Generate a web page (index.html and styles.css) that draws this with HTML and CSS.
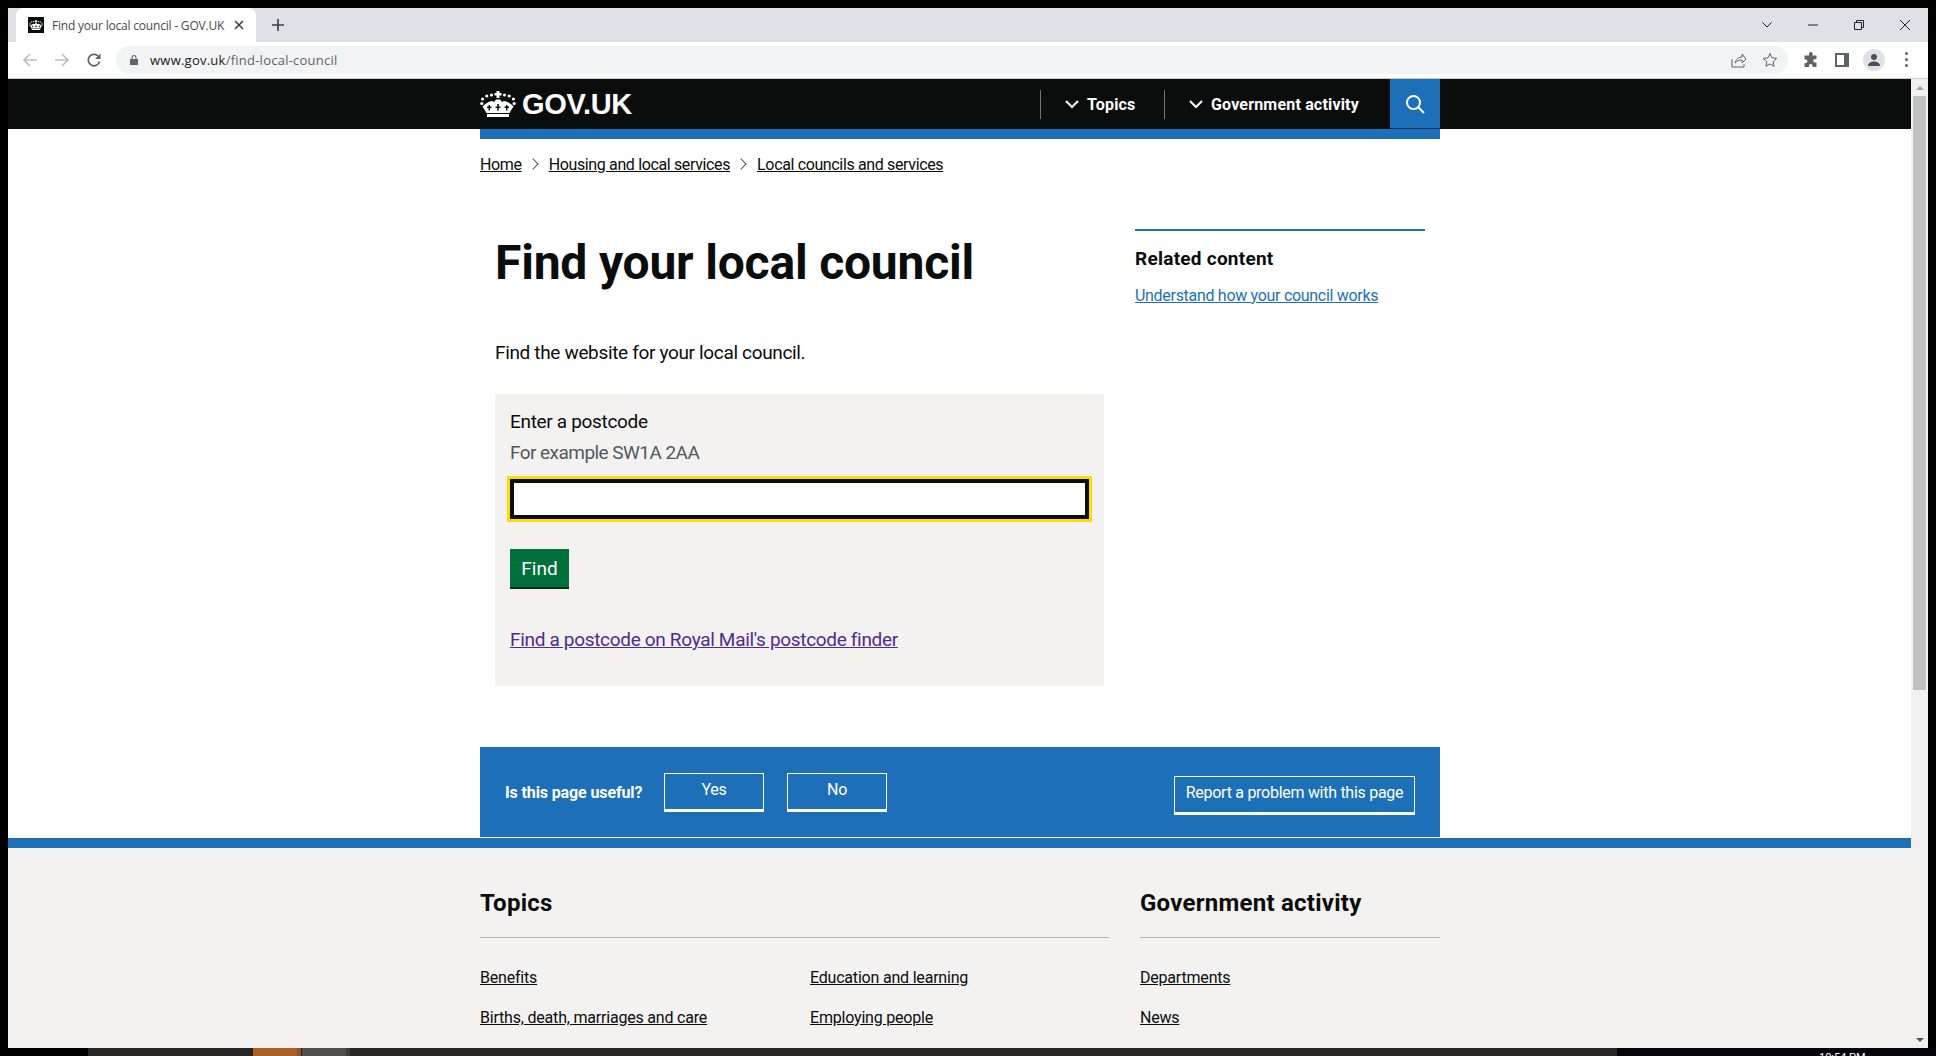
FILE: index.html
```html
<!DOCTYPE html>
<html lang="en">

<head>
  <meta charset="UTF-8" />
  <title>Find your local council - GOV.UK</title>
  <link rel="stylesheet" href="styles.css">
</head>

<body>
  <div class="window">
    <div class="tabstrip">
      <div class="tab">
        <span class="favicon">
          <svg viewBox="0 0 36 26" width="14" height="10"><use href="#crown"></use></svg>
        </span>
        <span class="tab-title">Find your local council - GOV.UK</span>
        <svg class="tab-close" viewBox="0 0 10 10" width="10" height="10"><path d="M1 1l8 8M9 1l-8 8"></path></svg>
      </div>
      <svg class="tab-new" viewBox="0 0 12 12" width="12" height="12"><path d="M6 0v12M0 6h12"></path></svg>
      <div class="win-controls">
        <svg viewBox="0 0 10 6" width="10" height="6"><path d="M.5.5L5 5 9.500.5"></path></svg>
        <svg viewBox="0 0 10 2" width="10" height="2"><path d="M0 1h10"></path></svg>
        <svg viewBox="0 0 10 10" width="10" height="10"><path d="M.5 2.500h7v7h-7zM2.500 2.500v-2h7v7h-2"></path></svg>
        <svg viewBox="0 0 10 10" width="10" height="10"><path d="M0 0l10 10M10 0L0 10"></path></svg>
      </div>
    </div>

    <div class="toolbar">
      <svg class="nav-icon faint" viewBox="0 0 16 16" width="16" height="16"><path d="M15 8H2M8 2L2 8l6 6"></path></svg>
      <svg class="nav-icon faint" viewBox="0 0 16 16" width="16" height="16"><path d="M1 8h13M8 2l6 6-6 6"></path></svg>
      <svg class="nav-icon reload" viewBox="0 0 16 16" width="16" height="16"><path d="M13.500 9.500A5.700 5.700 0 1 1 12 4"></path><path class="solid" d="M14.500 1.500v5.500H9z"></path></svg>
      <div class="omnibox">
        <svg class="lock" viewBox="0 0 8 10" width="8" height="10"><path d="M0 4h8v6H0zM1.500 4V2.500a2.500 2.500 0 0 1 5 0V4H5.500V2.500a1.500 1.500 0 0 0-3 0V4z"></path></svg>
        <span class="url"><span class="url-host">www.gov.uk</span>/find-local-council</span>
        <svg class="omni-icon share" viewBox="0 0 16 16" width="16" height="16"><path d="M1 7v8h12v-3M4 11c1-4 4-6 7-6V2l4 5-4 4V8C8 8 6 9 4 11z"></path></svg>
        <svg class="omni-icon" viewBox="0 0 16 16" width="16" height="16"><path d="M8 1.500l2 4.300 4.700.6-3.500 3.200.9 4.700L8 12l-4.100 2.300.9-4.700L1.300 6.400 6 5.800z"></path></svg>
      </div>
      <svg class="puzzle" viewBox="0 0 16 16" width="16" height="16"><path d="M6 1.500a1.800 1.800 0 0 1 3.500 0V3.500h4v3.500h-1.500a1.800 1.800 0 0 0 0 3.600h1.500V15h-4v-1.500a1.800 1.800 0 0 0-3.500 0V15H1.500v-4H3a1.800 1.800 0 0 0 0-3.500H1.500v-4H6z"></path></svg>
      <span class="side-panel"></span>
      <span class="avatar">
        <svg viewBox="0 0 14 14" width="14" height="14"><circle cx="7" cy="4" r="3"></circle><path d="M1 13c0-3 3-4.500 6-4.500s6 1.500 6 4.500z"></path></svg>
      </span>
      <span class="kebab"><i></i><i></i><i></i></span>
    </div>

    <div class="viewport">
      <div class="page">
        <header class="site-header">
          <div class="container header-inner">
            <a class="logo">
              <svg viewBox="0 0 36 26" width="36" height="26"><use href="#crown"></use></svg>
              <span>GOV.UK</span>
            </a>
            <nav class="header-nav">
              <a class="nav-link">
                <svg viewBox="0 0 14 9" width="14" height="9"><path d="M1 1l6 6 6-6"></path></svg>
                Topics
              </a>
              <a class="nav-link nav-link-wide">
                <svg viewBox="0 0 14 9" width="14" height="9"><path d="M1 1l6 6 6-6"></path></svg>
                Government activity
              </a>
              <span class="search-btn">
                <svg viewBox="0 0 20 20" width="20" height="20"><circle cx="8.500" cy="8.500" r="6.500"></circle><path d="M13.500 13.500L19 19"></path></svg>
              </span>
            </nav>
          </div>
        </header>

        <div class="container">
          <div class="header-rule"></div>
          <ol class="breadcrumbs">
            <li><a>Home</a></li>
            <li><a>Housing and local services</a></li>
            <li><a>Local councils and services</a></li>
          </ol>

          <div class="content">
            <main class="main-col">
              <h1>Find your local council</h1>
              <p class="lead">Find the website for your local council.</p>
              <div class="postcode-box">
                <label class="field-label">Enter a postcode</label>
                <div class="field-hint">For example SW1A 2AA</div>
                <div class="postcode-input"></div>
                <button class="find-btn">Find</button>
                <a class="visited-link">Find a postcode on Royal Mail's postcode finder</a>
              </div>
            </main>
            <aside class="related">
              <h2>Related content</h2>
              <a>Understand how your council works</a>
            </aside>
          </div>

          <div class="feedback">
            <strong>Is this page useful?</strong>
            <button class="fb-btn">Yes</button>
            <button class="fb-btn">No</button>
            <button class="fb-btn fb-report">Report a problem with this page</button>
          </div>
        </div>

        <footer class="site-footer">
          <div class="container footer-cols">
            <section class="footer-topics">
              <h2>Topics</h2>
              <ul>
                <li><a>Benefits</a></li>
                <li><a>Education and learning</a></li>
                <li><a>Births, death, marriages and care</a></li>
                <li><a>Employing people</a></li>
              </ul>
            </section>
            <section class="footer-gov">
              <h2>Government activity</h2>
              <ul>
                <li><a>Departments</a></li>
                <li><a>News</a></li>
              </ul>
            </section>
          </div>
        </footer>
      </div>

      <div class="scrollbar">
        <span class="arrow-up"></span>
        <span class="thumb"></span>
        <span class="arrow-down"></span>
      </div>
    </div>
  </div>

  <div class="taskbar">
    <span class="task-blank"></span>
    <span class="task-orange"></span>
    <span class="task-gray"></span>
    <span class="task-rest"></span>
    <span class="task-tray">
      <span class="task-clock">10:54 PM</span>
    </span>
  </div>

  <svg class="defs" width="0" height="0">
    <symbol id="crown" viewBox="0 0 36 26">
      <path class="crown-fill" d="M16.500 0h3v2h2v2.500h-2V7h-3V4.500h-2V2h2z"></path>
      <circle class="crown-fill" cx="1.800" cy="12.500" r="1.600"></circle>
      <circle class="crown-fill" cx="34.200" cy="12.500" r="1.600"></circle>
      <circle class="crown-fill" cx="2.600" cy="8" r="1.600"></circle>
      <circle class="crown-fill" cx="33.400" cy="8" r="1.600"></circle>
      <circle class="crown-fill" cx="6.800" cy="5" r="1.600"></circle>
      <circle class="crown-fill" cx="29.200" cy="5" r="1.600"></circle>
      <circle class="crown-fill" cx="11.500" cy="4" r="1.600"></circle>
      <circle class="crown-fill" cx="24.500" cy="4" r="1.600"></circle>
      <path class="crown-fill" fill-rule="evenodd" d="M2.500 15.500C6 12 9 10.500 12 10l2 1 2-2.500h4l2 2.500 2-1c3 .5 6 2 9.500 5.500-1.500 2.500-3 4.500-4 6.500H6.500c-1-2-2.500-4-4-6.500zM8.500 14v1.500H7V17h1.500v2.500H10V17h1.500v-1.500H10V14zM17.200 13v2.500h-1.700V17h1.700v2.500h1.600V17h1.700v-1.500h-1.700V13zM26 14v1.500h-1.500V17H26v2.500h1.500V17H29v-1.500h-1.500V14z"></path>
      <path class="crown-fill" d="M7 23h22v3H7z"></path>
    </symbol>
  </svg>
</body>

</html>
```

FILE: styles.css
```css
* {
  box-sizing: border-box;
}

html,
body {
  height: 100%;
  margin: 0;
}

body {
  width: 1936px;
  height: 1056px;
  overflow: hidden;
  display: flex;
  flex-direction: column;
  background: #000;
  font-family: Roboto, sans-serif;
  color: #0b0c0c;
}

a {
  color: inherit;
  text-decoration: underline;
}

ul,
ol {
  list-style: none;
  margin: 0;
  padding: 0;
}

svg path {
  fill: none;
  stroke: currentColor;
}

svg .crown-fill {
  fill: currentColor;
  stroke: none;
}

/* browser chrome */
.window {
  flex: 1;
  min-height: 0;
  margin: 8px 8px 0;
  display: flex;
  flex-direction: column;
  background: #fff;
}

.tabstrip {
  height: 34px;
  flex: none;
  display: flex;
  align-items: center;
  padding-left: 8px;
  background: #dee1e6;
}

.tab {
  width: 240px;
  height: 34px;
  display: flex;
  align-items: center;
  padding: 0 12px;
  background: #fff;
  border-radius: 8px 8px 0 0;
  font-family: "Open Sans", sans-serif;
  font-size: 12px;
  color: #45494e;
}

.favicon {
  width: 16px;
  height: 16px;
  display: flex;
  align-items: center;
  justify-content: center;
  background: #0b0c0c;
  color: #fff;
}

.tab-title {
  margin-left: 8px;
  flex: 1;
  white-space: nowrap;
  letter-spacing: -0.2px;
}

.tab-close {
  color: #3c4043;
  margin-left: 6px;
}

.tab-close path,
.tab-new path {
  stroke-width: 1.6;
}

.tab-new {
  margin-left: 16px;
  color: #3c4043;
}

.win-controls {
  margin-left: auto;
  display: flex;
  align-items: center;
  gap: 36px;
  padding-right: 18px;
  color: #202124;
}

.toolbar {
  height: 37px;
  flex: none;
  display: flex;
  align-items: center;
  padding: 0 0 1px 14px;
  background: #fff;
  border-bottom: 1px solid #ccc;
  color: #5f6368;
}

.nav-icon path {
  stroke-width: 1.7;
}

.nav-icon {
  margin-right: 16px;
  flex: none;
}

.nav-icon.faint {
  color: #bdc0c4;
}

.nav-icon .solid {
  fill: currentColor;
  stroke: none;
}

.reload {
  margin-right: 14px;
}

.omnibox {
  width: 1672px;
  height: 28px;
  flex: none;
  display: flex;
  align-items: center;
  padding: 0 10px 0 14px;
  background: #f1f3f4;
  border-radius: 14px;
}

.lock {
  flex: none;
}

.lock path {
  fill: #5f6368;
  stroke: none;
}

.url {
  margin-left: 12px;
  font-family: "Open Sans", sans-serif;
  font-size: 13px;
  letter-spacing: 0.24px;
  color: #5f6368;
}

.url-host {
  color: #202124;
}

.omni-icon {
  margin-left: 15px;
  flex: none;
}

.omni-icon.share {
  margin-left: auto;
}

.puzzle {
  margin-left: 15px;
  flex: none;
}

.puzzle path {
  fill: #5f6368;
  stroke: none;
}

.side-panel {
  width: 14px;
  height: 14px;
  flex: none;
  margin-left: 16px;
  background: #fff;
  border: 2px solid #5f6368;
  border-right-width: 5px;
}

.avatar {
  width: 22px;
  height: 22px;
  flex: none;
  margin-left: 14px;
  display: flex;
  align-items: center;
  justify-content: center;
  background: #dee1e6;
  border-radius: 50%;
  color: #4a4f5a;
}

.avatar path {
  fill: currentColor;
  stroke: none;
}

.avatar circle {
  fill: currentColor;
}

.kebab {
  margin-left: 20px;
  display: flex;
  flex-direction: column;
  gap: 3px;
}

.kebab i {
  width: 3px;
  height: 3px;
  background: #5f6368;
  border-radius: 50%;
}

/* page area */
.viewport {
  flex: 1;
  min-height: 0;
  display: flex;
}

.page {
  flex: 1;
  min-width: 0;
  overflow: hidden;
  background: #fff;
}

.container {
  width: 960px;
  margin-left: 472px;
}

.scrollbar {
  width: 17px;
  flex: none;
  display: flex;
  flex-direction: column;
  align-items: center;
  background: #f1f1f1;
}

.arrow-up {
  margin-top: 7px;
  border: 4px solid transparent;
  border-top: 0;
  border-bottom: 4px solid #a3a3a3;
}

.thumb {
  width: 13px;
  height: 594px;
  margin-top: 6px;
  background: #c1c1c1;
}

.arrow-down {
  margin-top: auto;
  margin-bottom: 6px;
  border: 4px solid transparent;
  border-bottom: 0;
  border-top: 4px solid #505050;
}

/* site header */
.site-header {
  height: 50px;
  background: #0b0c0c;
  color: #fff;
}

.header-inner {
  height: 50px;
  display: flex;
  align-items: center;
  justify-content: space-between;
}

.logo {
  display: flex;
  align-items: center;
  gap: 6px;
  text-decoration: none;
  font-family: "Liberation Sans", sans-serif;
  font-size: 29px;
  font-weight: 700;
  letter-spacing: -0.3px;
}

.header-nav {
  display: flex;
  align-items: center;
  height: 50px;
}

.nav-link {
  height: 29px;
  display: flex;
  align-items: center;
  gap: 8px;
  width: 124px;
  padding-left: 24px;
  border-left: 1px solid #6f777b;
  text-decoration: none;
  font-size: 16px;
  font-weight: 700;
  letter-spacing: 0.18px;
}

.nav-link svg path {
  stroke-width: 2;
}

.nav-link-wide {
  width: 226px;
}

.search-btn {
  width: 50px;
  height: 50px;
  display: flex;
  align-items: center;
  justify-content: center;
  background: #1d70b8;
  border-bottom: 1px solid #003078;
}

.search-btn circle,
.search-btn path {
  fill: none;
  stroke: #fff;
  stroke-width: 2;
}

.header-rule {
  height: 10px;
  background: #1d70b8;
}

.breadcrumbs {
  display: flex;
  align-items: center;
  height: 50px;
  font-size: 16px;
  letter-spacing: -0.36px;
}

.breadcrumbs li {
  display: flex;
  align-items: center;
}

.breadcrumbs li + li::before {
  content: "";
  width: 7px;
  height: 7px;
  margin: 0 12px 0 7px;
  border-top: 1px solid #505a5f;
  border-right: 1px solid #505a5f;
  transform: rotate(45deg);
}

.content {
  height: 558px;
  display: flex;
  padding: 40px 15px 0;
}

.main-col {
  width: 609px;
  flex: none;
  padding-top: 9px;
}

h1 {
  margin: 0;
  font-size: 48px;
  line-height: 50px;
  font-weight: 700;
  letter-spacing: -0.2px;
}

.lead {
  margin: 52px 0 0;
  font-size: 19px;
  line-height: 25px;
  letter-spacing: -0.34px;
}

.postcode-box {
  height: 292px;
  margin-top: 29px;
  padding: 15px;
  background: #f3f2f1;
  font-size: 19px;
  letter-spacing: -0.32px;
}

.field-label {
  display: block;
  line-height: 25px;
}

.field-hint {
  margin-top: 6px;
  line-height: 25px;
  letter-spacing: -0.55px;
  color: #505a5f;
}

.postcode-input {
  height: 40px;
  margin-top: 14px;
  background: #fff;
  border: 2px solid #0b0c0c;
  outline: 3px solid #fd0;
  box-shadow: inset 0 0 0 2px #0b0c0c;
}

.find-btn {
  display: block;
  width: 59px;
  height: 38px;
  margin-top: 30px;
  padding: 0;
  border: 0;
  background: #00703c;
  box-shadow: 0 2px 0 #002d18;
  color: #fff;
  font-family: inherit;
  font-size: 19px;
}

.visited-link {
  display: block;
  margin-top: 40px;
  line-height: 25px;
  color: #4c2c92;
}

.related {
  width: 290px;
  height: 200px;
  margin-left: 31px;
  padding-top: 15px;
  border-top: 2px solid #1d70b8;
  font-size: 16px;
  letter-spacing: -0.3px;
  color: #1d70b8;
}

.related h2 {
  margin: 0 0 15px;
  font-size: 19px;
  line-height: 25px;
  font-weight: 700;
  letter-spacing: 0.25px;
  color: #0b0c0c;
}

.related a {
  line-height: 20px;
}

.feedback {
  height: 90px;
  display: flex;
  align-items: center;
  padding: 0 25px;
  background: #1d70b8;
  color: #fff;
  font-size: 16px;
  letter-spacing: -0.12px;
}

.fb-btn {
  width: 100px;
  height: 39px;
  margin-left: 23px;
  padding: 0 0 3px;
  background: #1d70b8;
  border: 1px solid #fff;
  border-bottom-width: 3px;
  color: #fff;
  font-family: inherit;
  font-size: 16px;
  letter-spacing: -0.28px;
}

.feedback strong {
  width: 136px;
  white-space: nowrap;
}

.fb-report {
  width: 241px;
  margin-left: auto;
  margin-top: 6px;
}

/* footer */
.site-footer {
  height: 210px;
  margin-top: 1px;
  border-top: 10px solid #1d70b8;
  background: #f3f2f1;
}

.footer-cols {
  display: flex;
  gap: 31px;
  padding-top: 40px;
}

.site-footer h2 {
  margin: 0;
  height: 50px;
  border-bottom: 1px solid #b1b4b6;
  font-size: 24px;
  line-height: 30px;
  font-weight: 700;
  letter-spacing: 0.25px;
}

.site-footer ul {
  display: grid;
  row-gap: 20px;
  padding-top: 30px;
  font-size: 16px;
  line-height: 20px;
  letter-spacing: -0.2px;
}

.footer-topics {
  width: 629px;
}

.footer-topics ul {
  grid-template-columns: 330px 1fr;
}

.footer-gov {
  width: 300px;
}

/* bits of the desktop at the bottom */
.taskbar {
  height: 8px;
  flex: none;
  display: flex;
  overflow: hidden;
  background: #262626;
}

.task-blank {
  width: 88px;
  background: #000;
}

.task-orange {
  width: 48px;
  margin-left: 165px;
  background: #a86026;
  border-right: 4px solid #8f5220;
}

.task-gray {
  width: 48px;
  margin-left: 1px;
  background: #4f4f4f;
  border-right: 4px solid #3d3d3d;
}

.task-rest {
  flex: 1;
}

.task-tray {
  width: 319px;
  padding: 3px 0 0 202px;
  background: #04040a;
}

.task-clock {
  display: block;
  font-size: 11px;
  white-space: nowrap;
  color: #fff;
}

.defs {
  position: absolute;
}
```
